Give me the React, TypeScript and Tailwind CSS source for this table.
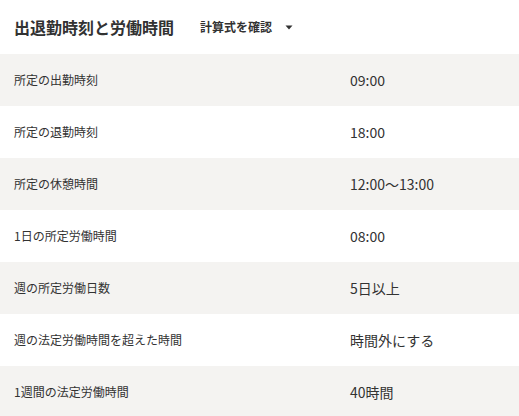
const rows = [
  { label: "所定の出勤時刻", value: "09:00" },
  { label: "所定の退勤時刻", value: "18:00" },
  { label: "所定の休憩時間", value: "12:00〜13:00" },
  { label: "1日の所定労働時間", value: "08:00" },
  { label: "週の所定労働日数", value: "5日以上" },
  { label: "週の法定労働時間を超えた時間", value: "時間外にする" },
  { label: "1週間の法定労働時間", value: "40時間" },
];

export default function App() {
  return (
    <div
      className="w-[519px] h-[416px] overflow-hidden bg-white text-[#323232]"
      style={{ fontFamily: '"Noto Sans CJK JP", "Noto Sans", sans-serif' }}
    >
      <div className="h-[54px] flex items-center px-[14px]">
        <h2 className="text-[16px] font-bold leading-none">出退勤時刻と労働時間</h2>
        <button className="ml-[26px] flex items-center text-[12px] font-bold leading-none">
          計算式を確認
          <svg className="ml-[13px]" width="8" height="5" viewBox="0 0 8 5">
            <path d="M0.5 0.5h7L4 4.5z" fill="#323232" />
          </svg>
        </button>
      </div>
      <div>
        {rows.map((row, i) => (
          <div
            key={i}
            className={`h-[52px] grid grid-cols-[336px_1fr] items-center px-[14px] ${i % 2 === 0 ? "bg-[#f4f3f1]" : "bg-white"}`}
          >
            <span className="text-[12px]">{row.label}</span>
            <span className="text-[14px]">{row.value}</span>
          </div>
        ))}
      </div>
    </div>
  );
}
